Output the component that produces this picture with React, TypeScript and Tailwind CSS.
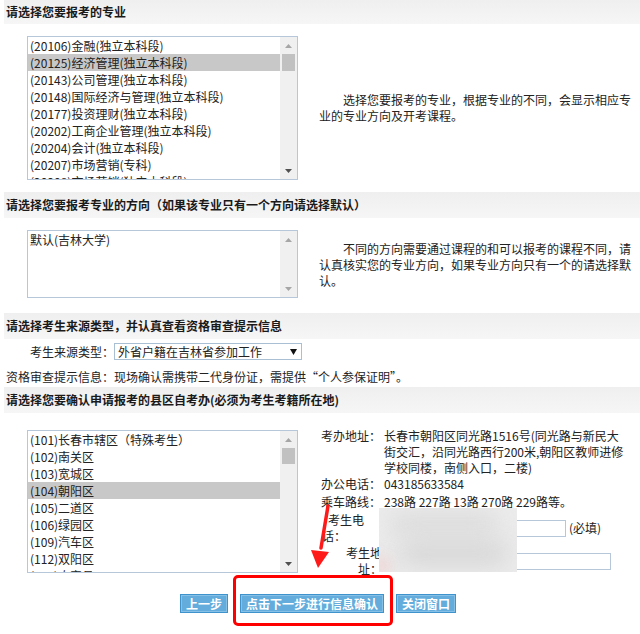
import React from "react";

function Tri({ dir, color }: { dir: "up" | "down"; color: string }) {
  return (
    <svg width="7" height="4" viewBox="0 0 7 4">
      {dir === "up" ? (
        <polygon points="3.5,0 7,4 0,4" fill={color} />
      ) : (
        <polygon points="0,0 7,0 3.5,4" fill={color} />
      )}
    </svg>
  );
}

function Listbox({
  items,
  selected,
  heightClass,
  thumbClass,
  downColor,
}: {
  items: string[];
  selected: number;
  heightClass: string;
  thumbClass?: string;
  downColor: string;
}) {
  return (
    <div className={"flex w-[271px] shrink-0 border border-[#b5c7d9] bg-white " + heightClass}>
      <div className="flex-1 overflow-hidden">
        {items.map((t, i) => (
          <div
            key={i}
            className={
              "h-[17px] leading-[17px] pl-[2px] whitespace-nowrap " +
              (i === selected ? "bg-[#c8c8c8]" : "")
            }
          >
            {t}
          </div>
        ))}
      </div>
      <div className="w-[17px] bg-[#f0f0f0] flex flex-col">
        <div className="h-[17px] flex items-center justify-center">
          <Tri dir="up" color="#a6a6a6" />
        </div>
        <div className="flex-1 px-[2px]">
          {thumbClass ? <div className={"bg-[#c1c1c1] " + thumbClass} /> : null}
        </div>
        <div className="h-[17px] flex items-center justify-center">
          <Tri dir="down" color={downColor} />
        </div>
      </div>
    </div>
  );
}

function Header({ children, className }: { children: React.ReactNode; className: string }) {
  return (
    <div
      className={
        "ml-[4px] pl-[2px] bg-gradient-to-b from-[#efefef] to-[#f6f6f6] font-bold text-[12px] text-[#1a1a1a] whitespace-nowrap " +
        className
      }
    >
      {children}
    </div>
  );
}

function Btn({ children }: { children: React.ReactNode }) {
  return (
    <div className="h-[19px] px-[5px] leading-[17px] border border-[#3f93cd] bg-[#63acdb] shadow-[inset_0_0_0_1px_#86c0e6] text-white font-bold text-[12px] whitespace-nowrap">
      {children}
    </div>
  );
}

const majors = [
  "(20106)金融(独立本科段)",
  "(20125)经济管理(独立本科段)",
  "(20143)公司管理(独立本科段)",
  "(20148)国际经济与管理(独立本科段)",
  "(20177)投资理财(独立本科段)",
  "(20202)工商企业管理(独立本科段)",
  "(20204)会计(独立本科段)",
  "(20207)市场营销(专科)",
  "(20208)市场营销(独立本科段)",
];

const districts = [
  "(101)长春市辖区（特殊考生）",
  "(102)南关区",
  "(103)宽城区",
  "(104)朝阳区",
  "(105)二道区",
  "(106)绿园区",
  "(109)汽车区",
  "(112)双阳区",
  "(122)农安县",
];

export default function App() {
  return (
    <div className="relative w-[640px] h-[634px] overflow-hidden bg-white text-[12px] text-[#222] font-['Noto_Sans_CJK_SC',sans-serif]">
      {/* Section 1 */}
      <Header className="h-[24px] leading-[24px]">请选择您要报考的专业</Header>
      <div className="flex items-center mt-[12px]">
        <div className="ml-[27px]">
          <Listbox
            items={majors}
            selected={1}
            heightClass="h-[144px]"
            thumbClass="h-[17px]"
            downColor="#505050"
          />
        </div>
        <p className="ml-[21px] w-[313px] leading-[16px] indent-[24px]">
          选择您要报考的专业，根据专业的不同，会显示相应专业的专业方向及开考课程。
        </p>
      </div>

      {/* Section 2 */}
      <Header className="mt-[12px] h-[26px] leading-[26px]">
        请选择您要报考专业的方向（如果该专业只有一个方向请选择默认）
      </Header>
      <div className="flex items-center mt-[12px]">
        <div className="ml-[27px]">
          <Listbox items={["默认(吉林大学)"]} selected={-1} heightClass="h-[68px]" downColor="#a6a6a6" />
        </div>
        <p className="ml-[21px] w-[313px] leading-[16px] indent-[24px] pt-[2px]">
          不同的方向需要通过课程的和可以报考的课程不同，请认真核实您的专业方向，如果专业方向只有一个的请选择默认。
        </p>
      </div>

      {/* Section 3 */}
      <Header className="mt-[15px] h-[26px] leading-[26px]">
        请选择考生来源类型，并认真查看资格审查提示信息
      </Header>
      <div className="flex items-center mt-[4px] h-[17px]">
        <span className="ml-[30px] leading-[17px]">考生来源类型：</span>
        <div className="w-[188px] h-[17px] border border-[#a9bfd3] flex items-center justify-between pl-[3px] pr-[4px]">
          <span className="leading-[15px] whitespace-nowrap">外省户籍在吉林省参加工作</span>
          <svg width="7" height="6" viewBox="0 0 7 6">
            <polygon points="0,0 7,0 3.5,6" fill="#111" />
          </svg>
        </div>
      </div>
      <div className="mt-[9px] h-[16px] leading-[16px] ml-[6px] whitespace-nowrap">
        资格审查提示信息：现场确认需携带二代身份证，需提供“个人参保证明”。
      </div>

      {/* Section 4 */}
      <Header className="mt-[2px] h-[26px] leading-[26px]">
        请选择您要确认申请报考的县区自考办(必须为考生考籍所在地)
      </Header>
      <div className="flex items-start h-[167px]">
        <div className="ml-[27px] mt-[17px]">
          <Listbox
            items={districts}
            selected={3}
            heightClass="h-[143px]"
            thumbClass="h-[16px]"
            downColor="#505050"
          />
        </div>
        <div className="ml-[23px] mt-[15px] leading-[16px]">
          <div className="flex">
            <div className="w-[63px] shrink-0">考办地址：</div>
            <div className="w-[243px]">长春市朝阳区同光路1516号(同光路与新民大街交汇，沿同光路西行200米,朝阳区教师进修学校同楼，南侧入口，二楼)</div>
          </div>
          <div className="flex">
            <div className="w-[63px] shrink-0">办公电话：</div>
            <div>043185633584</div>
          </div>
          <div className="flex mt-[2px]">
            <div className="w-[63px] shrink-0">乘车路线：</div>
            <div className="whitespace-nowrap">238路 227路 13路 270路 229路等。</div>
          </div>
          <div className="flex items-center mt-[2px] pl-[1px]">
            <div className="w-[44px] shrink-0 indent-[6px]">考生电话：</div>
            <div className="ml-[20px] w-[180px] h-[17px] border border-[#b5c7d9]" />
            <span className="ml-[3px]">(必填)</span>
          </div>
          <div className="flex items-center mt-[1px]">
            <div className="ml-[21px] w-[40px] shrink-0 text-right">考生地址：</div>
            <div className="ml-[4px] w-[225px] h-[17px] border border-[#b5c7d9]" />
          </div>
        </div>
      </div>

      {/* Buttons */}
      <div className="flex mt-[14px] pl-[180px] gap-[12px]">
        <Btn>上一步</Btn>
        <Btn>点击下一步进行信息确认</Btn>
        <Btn>关闭窗口</Btn>
      </div>

      {/* Blurred privacy overlay */}
      <div className="absolute left-[379px] top-[508px] w-[138px] h-[64px] overflow-hidden bg-[#ececec]">
        <div className="absolute left-[10px] top-[6px] w-[110px] h-[20px] rounded-full bg-[#d9d9d9] blur-md" />
        <div className="absolute left-[20px] top-[36px] w-[110px] h-[20px] rounded-full bg-[#d2d2d2] blur-md" />
        <div className="absolute left-[-6px] top-[50px] w-[16px] h-[16px] rounded-full bg-[#f2c9c9] blur-sm" />
      </div>

      {/* Red arrow */}
      <svg className="absolute left-[306px] top-[500px]" width="30" height="72" viewBox="0 0 30 72">
        <line x1="22" y1="6" x2="15" y2="48" stroke="#ff1a1a" strokeWidth="3.5" strokeLinecap="round" />
        <polygon points="5,50 23,52 12,68" fill="#ff1a1a" />
      </svg>

      {/* Red highlight box */}
      <div className="absolute left-[233px] top-[575px] w-[160px] h-[51px] border-[3px] border-[#ff0000] rounded-[5px]" />
    </div>
  );
}
